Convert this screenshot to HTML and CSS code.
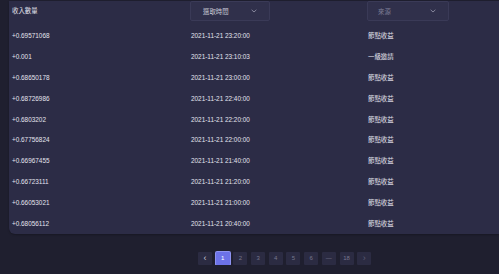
FILE: index.html
```html
<!DOCTYPE html>
<html lang="zh-Hant">
<head>
    <meta charset="UTF-8">
    <meta name="viewport" content="width=device-width, initial-scale=1.0">
    <title>收入記錄</title>
    <link rel="stylesheet" href="styles.css">
</head>
<body>

    <div class="card">
        <div class="head">
            <div class="col-amount head-label">收入數量</div>
            <div class="col-time">
                <div class="picker picker-time">
                    <span>選取時間</span>
                    <svg class="chev" width="6" height="4" viewBox="0 0 6 4"><path d="M0.6 0.8 L3 3 L5.4 0.8" fill="none" stroke="#9a9ab0" stroke-width="0.8"/></svg>
                </div>
            </div>
            <div class="col-source">
                <div class="picker picker-source">
                    <span class="placeholder">來源</span>
                    <svg class="chev" width="6" height="4" viewBox="0 0 6 4"><path d="M0.6 0.8 L3 3 L5.4 0.8" fill="none" stroke="#9a9ab0" stroke-width="0.8"/></svg>
                </div>
            </div>
        </div>

        <div class="row"><div class="col-amount">+0.69571068</div><div class="col-time">2021-11-21 23:20:00</div><div class="col-source">節點收益</div></div>
        <div class="row"><div class="col-amount">+0.001</div><div class="col-time">2021-11-21 23:10:03</div><div class="col-source">一級邀請</div></div>
        <div class="row"><div class="col-amount">+0.68650178</div><div class="col-time">2021-11-21 23:00:00</div><div class="col-source">節點收益</div></div>
        <div class="row"><div class="col-amount">+0.68726986</div><div class="col-time">2021-11-21 22:40:00</div><div class="col-source">節點收益</div></div>
        <div class="row"><div class="col-amount">+0.6803202</div><div class="col-time">2021-11-21 22:20:00</div><div class="col-source">節點收益</div></div>
        <div class="row"><div class="col-amount">+0.67756824</div><div class="col-time">2021-11-21 22:00:00</div><div class="col-source">節點收益</div></div>
        <div class="row"><div class="col-amount">+0.66967455</div><div class="col-time">2021-11-21 21:40:00</div><div class="col-source">節點收益</div></div>
        <div class="row"><div class="col-amount">+0.66723111</div><div class="col-time">2021-11-21 21:20:00</div><div class="col-source">節點收益</div></div>
        <div class="row"><div class="col-amount">+0.66053021</div><div class="col-time">2021-11-21 21:00:00</div><div class="col-source">節點收益</div></div>
        <div class="row"><div class="col-amount">+0.68056112</div><div class="col-time">2021-11-21 20:40:00</div><div class="col-source">節點收益</div></div>
    </div>

    <div class="pager">
        <div class="page arrow">&lsaquo;</div>
        <div class="page active">1</div>
        <div class="page">2</div>
        <div class="page">3</div>
        <div class="page">4</div>
        <div class="page">5</div>
        <div class="page">6</div>
        <div class="page">&mdash;</div>
        <div class="page">18</div>
        <div class="page arrow dim">&rsaquo;</div>
    </div>

</body>
</html>
```

FILE: styles.css
```css
body {
    font-family: "Liberation Sans", "Noto Sans CJK TC", sans-serif;
    background-color: #1f1f2f;
    margin: 0;
    color: #e4e4ee;
    font-size: 6.4px;
    overflow: hidden;
}

.card {
    background-color: #2c2c46;
    margin: 1px 0 0 9px;
    padding-left: 3px;
    border-radius: 0 0 0 6px;
    box-shadow: 0 1px 2px rgba(0, 0, 0, 0.25);
}

.head,
.row {
    display: flex;
}

.head {
    height: 24px;
    align-items: flex-start;
}

.head-label {
    line-height: 20px;
}

.row {
    height: 20.9px;
    align-items: center;
}

.col-amount {
    width: 179px;
    flex-shrink: 0;
}

.col-time {
    width: 177px;
    flex-shrink: 0;
}

.col-source {
    flex: 1;
}

.picker {
    height: 18px;
    background-color: #30304b;
    border: 1px solid #3a3a57;
    border-radius: 2px;
    display: flex;
    align-items: center;
    justify-content: space-between;
    box-sizing: content-box;
    color: #c9c9d6;
}

.picker-time {
    width: 54px;
    padding: 0 12px 0 12px;
    margin-left: -1px;
}

.picker-source {
    width: 58px;
    padding: 0 12px 0 10px;
    margin-left: -1px;
}

.placeholder {
    color: #7c7c94;
}

.chev {
    display: block;
}

.pager {
    display: flex;
    gap: 3.7px;
    padding: 18px 0 0 198px;
}

.page {
    width: 14px;
    height: 13px;
    background-color: #2b2b42;
    border-radius: 1px;
    color: #77778e;
    display: flex;
    align-items: center;
    justify-content: center;
    font-size: 6px;
}

.page.arrow {
    font-size: 9px;
    color: #c9c9d6;
}

.page.arrow.dim {
    color: #5c5c72;
}

.page.active {
    background-color: #6c72e8;
    color: #ffffff;
    box-shadow: 0 0 0 1px #8d92f0;
}
```
